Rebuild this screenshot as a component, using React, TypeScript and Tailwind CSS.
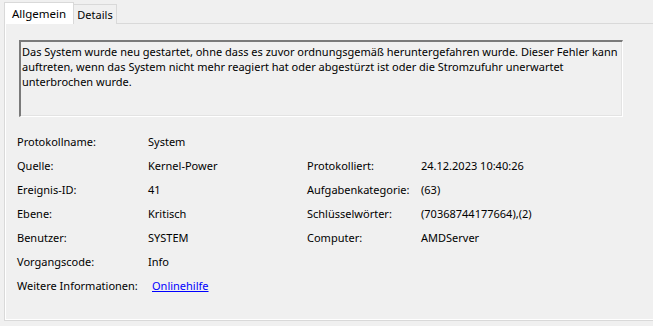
import React from 'react';

const leftRows: [string, React.ReactNode][] = [
  ['Protokollname:', 'System'],
  ['Quelle:', 'Kernel-Power'],
  ['Ereignis-ID:', '41'],
  ['Ebene:', 'Kritisch'],
  ['Benutzer:', 'SYSTEM'],
  ['Vorgangscode:', 'Info'],
];

const rightRows: ([string, string] | null)[] = [
  null,
  ['Protokolliert:', '24.12.2023 10:40:26'],
  ['Aufgabenkategorie:', '(63)'],
  ['Schlüsselwörter:', '(70368744177664),(2)'],
  ['Computer:', 'AMDServer'],
  null,
];

const App: React.FC = () => {
  return (
    <div
      className="w-[653px] h-[326px] overflow-hidden bg-[#f0f0f0] text-[11px] text-black"
      style={{ fontFamily: '"Segoe UI", "Noto Sans", sans-serif' }}
    >
      {/* tab strip */}
      <div className="flex items-end h-[24px] pl-[4px]">
        <div className="relative z-10 h-[22px] w-[70px] bg-white border border-[#d9d9d9] border-b-0 flex items-center justify-center text-[11.5px]">
          Allgemein
        </div>
        <div className="h-[20px] w-[44px] -ml-[1px] bg-[#f0f0f0] border border-[#d9d9d9] border-b-0 flex items-center justify-center pt-[1px]">
          Details
        </div>
      </div>

      {/* page */}
      <div className="-mt-[1px] ml-[4px] w-[700px] h-[298px] border border-[#d9d9d9] bg-[#f0f0f0]">
        <div className="w-full h-full border-l border-b border-white pl-[13px] pt-[16px]">
          <div className="w-[604px] h-[77px] border-t-2 border-l-2 border-t-[#7a7a7a] border-l-[#7a7a7a] border-b border-r border-b-white border-r-white">
            <div className="w-full h-full border-b border-r border-[#e3e3e3] px-[1px] pt-[2px] leading-[15px] whitespace-nowrap">
              Das System wurde neu gestartet, ohne dass es zuvor ordnungsgemäß heruntergefahren wurde. Dieser Fehler kann
              <br />
              auftreten, wenn das System nicht mehr reagiert hat oder abgestürzt ist oder die Stromzufuhr unerwartet
              <br />
              unterbrochen wurde.
            </div>
          </div>

          <div className="mt-[13px] -ml-[2px] grid grid-cols-[131px_159px_114px_1fr] auto-rows-[24px] items-center">
            {leftRows.map(([label, value], i) => (
              <React.Fragment key={label}>
                <div>{label}</div>
                <div>{value}</div>
                <div>{rightRows[i]?.[0] ?? ''}</div>
                <div>{rightRows[i]?.[1] ?? ''}</div>
              </React.Fragment>
            ))}
            <div className="whitespace-nowrap">Weitere Informationen:</div>
            <div className="pl-[4px]">
              <a href="#" className="text-[#0000ff] underline">
                Onlinehilfe
              </a>
            </div>
          </div>
        </div>
      </div>
    </div>
  );
};

export default App;
